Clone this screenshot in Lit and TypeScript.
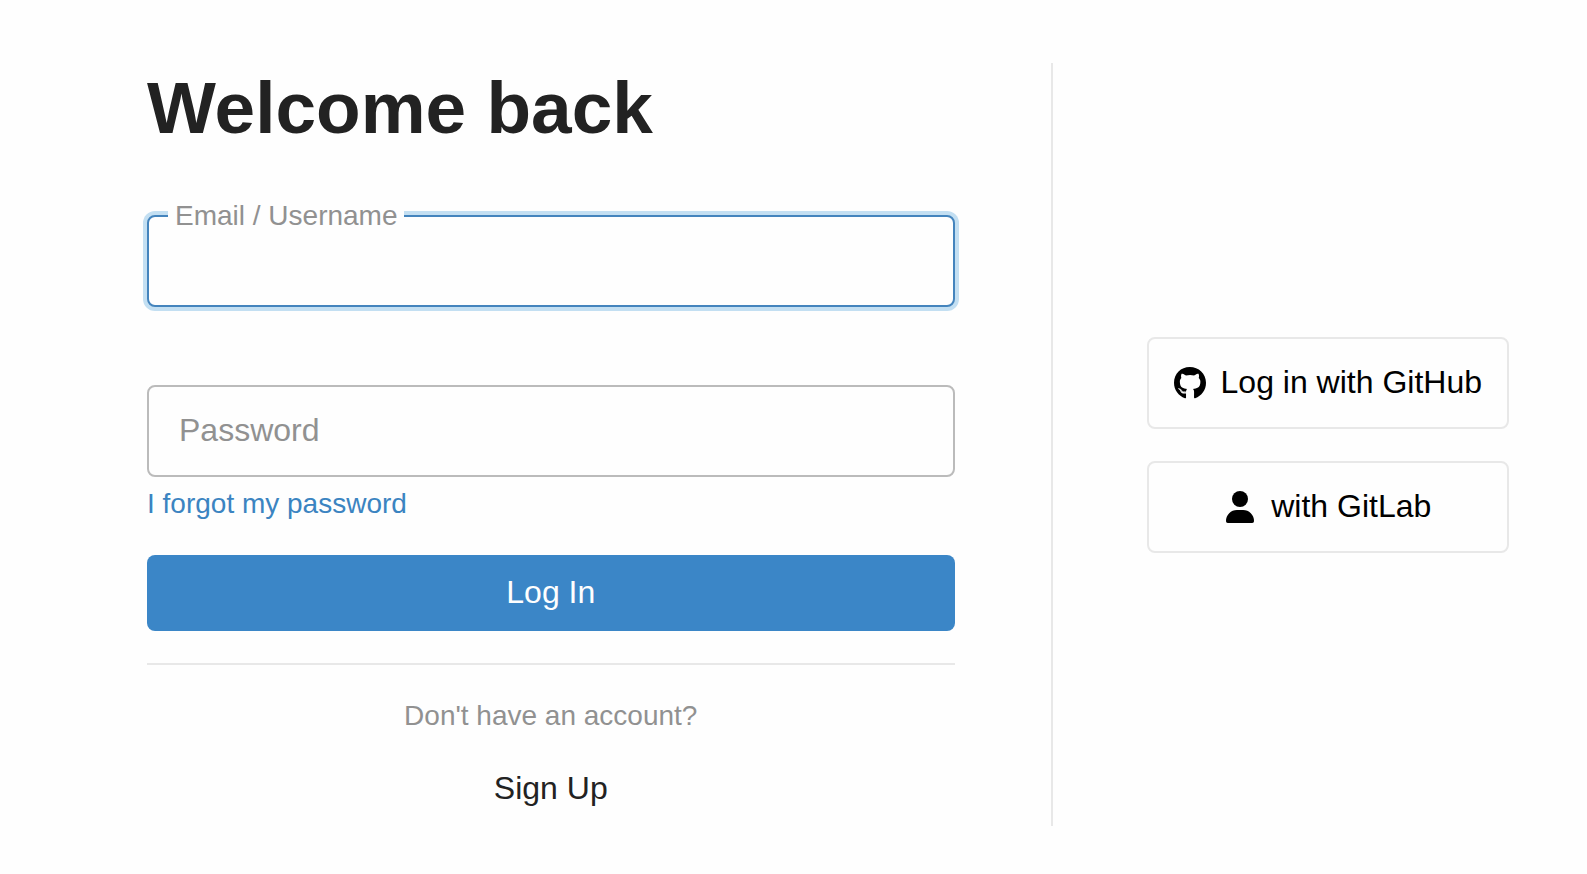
import { LitElement, html, css } from "lit";
import { customElement } from "lit/decorators.js";

@customElement("app-root")
export class AppRoot extends LitElement {
  static styles = css`
    :host {
      display: block;
      min-height: 100vh;
      box-sizing: border-box;
      padding: 63px 0 47px;
      background: #fefefe;
      color: #222222;
      font-family: "Liberation Sans", Arial, sans-serif;
      font-size: 32px;
      line-height: 36px;
    }
    * {
      box-sizing: border-box;
    }
    .page {
      display: grid;
      grid-template-columns: minmax(0, 1fr) auto;
    }
    .login {
      display: flex;
      flex-direction: column;
      padding: 0 96px 0 147px;
      border-right: 2px solid #e8e8e8;
    }
    .title {
      margin: 0 0 62px;
      font-size: 73px;
      line-height: 90px;
      font-weight: 700;
    }
    .form {
      display: flex;
      flex-direction: column;
    }
    .field {
      position: relative;
      display: flex;
    }
    .field + .field {
      margin-top: 78px;
    }
    .input {
      flex: 1;
      min-width: 0;
      height: 92px;
      padding: 0 30px;
      border: 2px solid #bbbbbb;
      border-radius: 8px;
      outline: none;
      background: #fefefe;
      color: inherit;
      font: inherit;
    }
    .input.active,
    .input:focus {
      border-color: #4484bd;
      box-shadow: 0 0 0 4px #c3dff2;
    }
    .label {
      position: absolute;
      top: 27px;
      left: 32px;
      color: #919191;
      pointer-events: none;
    }
    .label.raised {
      top: -15px;
      left: 21px;
      padding: 0 6px 0 7px;
      background: #fefefe;
      font-size: 28px;
      line-height: 32px;
    }
    .forgot {
      align-self: flex-start;
      margin: 11px 0 35px;
      color: #3b84c1;
      font-size: 28px;
      line-height: 32px;
      text-decoration: none;
    }
    .submit {
      height: 76px;
      padding: 0 0 2px;
      border: 0;
      border-radius: 8px;
      background: #3b86c7;
      color: #fefefe;
      font: inherit;
    }
    .rule {
      width: 100%;
      margin: 32px 0 35px;
      border: 0;
      border-top: 2px solid #e8e8e8;
    }
    .prompt {
      margin: 0 0 38px;
      color: #919191;
      font-size: 28px;
      line-height: 32px;
      text-align: center;
    }
    .signup {
      align-self: center;
      margin-bottom: 20px;
      color: inherit;
      text-decoration: none;
    }
    .providers {
      display: flex;
      flex-direction: column;
      justify-content: center;
      gap: 32px;
      padding: 0 78px 0 94px;
    }
    .provider {
      display: flex;
      align-items: center;
      justify-content: center;
      gap: 15px;
      height: 92px;
      padding: 0 25px;
      border: 2px solid #e8e8e8;
      border-radius: 8px;
      background: #fefefe;
      color: #000000;
      font: inherit;
      white-space: nowrap;
    }
    .name {
      padding-bottom: 2px;
    }
    .icon {
      width: 32px;
      height: 32px;
      fill: currentColor;
    }
  `;

  render() {
    return html`
      <main class="page">
        <section class="login">
          <h1 class="title">Welcome back</h1>
          <form class="form" @submit=${(e: Event) => e.preventDefault()}>
            <div class="field">
              <input class="input active" id="user" type="text" autocomplete="username" />
              <label class="label raised" for="user">Email / Username</label>
            </div>
            <div class="field">
              <input class="input" id="password" type="password" autocomplete="current-password" />
              <label class="label" for="password">Password</label>
            </div>
            <a class="forgot" href="#forgot">I forgot my password</a>
            <button class="submit" type="submit">Log In</button>
          </form>
          <hr class="rule" />
          <p class="prompt">Don't have an account?</p>
          <a class="signup" href="#signup">Sign Up</a>
        </section>
        <section class="providers">
          <button class="provider" type="button">
            <svg class="icon" viewBox="0 0 496 496" aria-hidden="true">
              <path
                transform="translate(0 -8)"
                d="M165.900 397.400c0 2-2.300 3.600-5.200 3.600-3.300.3-5.600-1.300-5.600-3.600 0-2 2.300-3.600 5.200-3.600 3-.3 5.600 1.300 5.600 3.600zm-31.100-4.500c-.7 2 1.300 4.300 4.300 4.900 2.600 1 5.600 0 6.200-2s-1.300-4.300-4.300-5.200c-2.600-.7-5.500.3-6.200 2.300zm44.200-1.700c-2.900.7-4.900 2.600-4.600 4.900.3 2 2.900 3.300 5.900 2.600 2.900-.7 4.900-2.600 4.600-4.600-.3-1.900-3-3.200-5.900-2.900zM244.800 8C106.100 8 0 113.300 0 252c0 110.900 69.800 205.800 169.500 239.200 12.800 2.300 17.300-5.600 17.300-12.100 0-6.200-.3-40.400-.3-61.400 0 0-70 15-84.700-29.800 0 0-11.400-29.100-27.800-36.600 0 0-22.900-15.700 1.600-15.400 0 0 24.900 2 38.600 25.800 21.900 38.600 58.600 27.500 72.900 20.900 2.300-16 8.800-27.100 16-33.700-55.900-6.200-112.300-14.300-112.300-110.500 0-27.500 7.600-41.300 23.600-58.900-2.600-6.500-11.100-33.300 2.600-67.900 20.900-6.500 69 27 69 27 20-5.600 41.500-8.500 62.800-8.500s42.800 2.900 62.800 8.500c0 0 48.100-33.600 69-27 13.700 34.700 5.200 61.400 2.600 67.900 16 17.700 25.800 31.500 25.800 58.900 0 96.500-58.900 104.200-114.800 110.500 9.200 7.900 17 22.900 17 46.400 0 33.700-.3 75.400-.3 83.600 0 6.500 4.600 14.400 17.300 12.100C428.200 457.800 496 362.900 496 252 496 113.300 383.500 8 244.800 8zM97.200 352.900c-1.300 1-1 3.300.7 5.200 1.600 1.600 3.900 2.300 5.200 1 1.300-1 1-3.300-.7-5.200-1.600-1.600-3.900-2.300-5.200-1zm-10.800-8.100c-.7 1.300.3 2.900 2.300 3.900 1.600 1 3.600.7 4.300-.7.7-1.300-.3-2.900-2.300-3.900-2-.6-3.600-.3-4.300.7zm32.400 35.600c-1.600 1.300-1 4.300 1.300 6.200 2.300 2.300 5.200 2.600 6.500 1 1.300-1.300.7-4.300-1.300-6.200-2.200-2.300-5.200-2.600-6.500-1zm-11.400-14.700c-1.600 1-1.600 3.600 0 5.900 1.600 2.300 4.300 3.300 5.600 2.300 1.600-1.300 1.600-3.900 0-6.200-1.400-2.300-4-3.300-5.600-2z"
              />
            </svg>
            <span class="name">Log in with GitHub</span>
          </button>
          <button class="provider" type="button">
            <svg class="icon" viewBox="0 0 32 32" aria-hidden="true">
              <circle cx="16" cy="8" r="8" />
              <path
                d="M12.900 19h6.200A10.900 10.900 0 0 1 30 29.900v.3a1.800 1.800 0 0 1-1.800 1.800H3.800A1.800 1.800 0 0 1 2 30.200v-.3A10.900 10.900 0 0 1 12.900 19z"
              />
            </svg>
            <span class="name">with GitLab</span>
          </button>
        </section>
      </main>
    `;
  }
}
